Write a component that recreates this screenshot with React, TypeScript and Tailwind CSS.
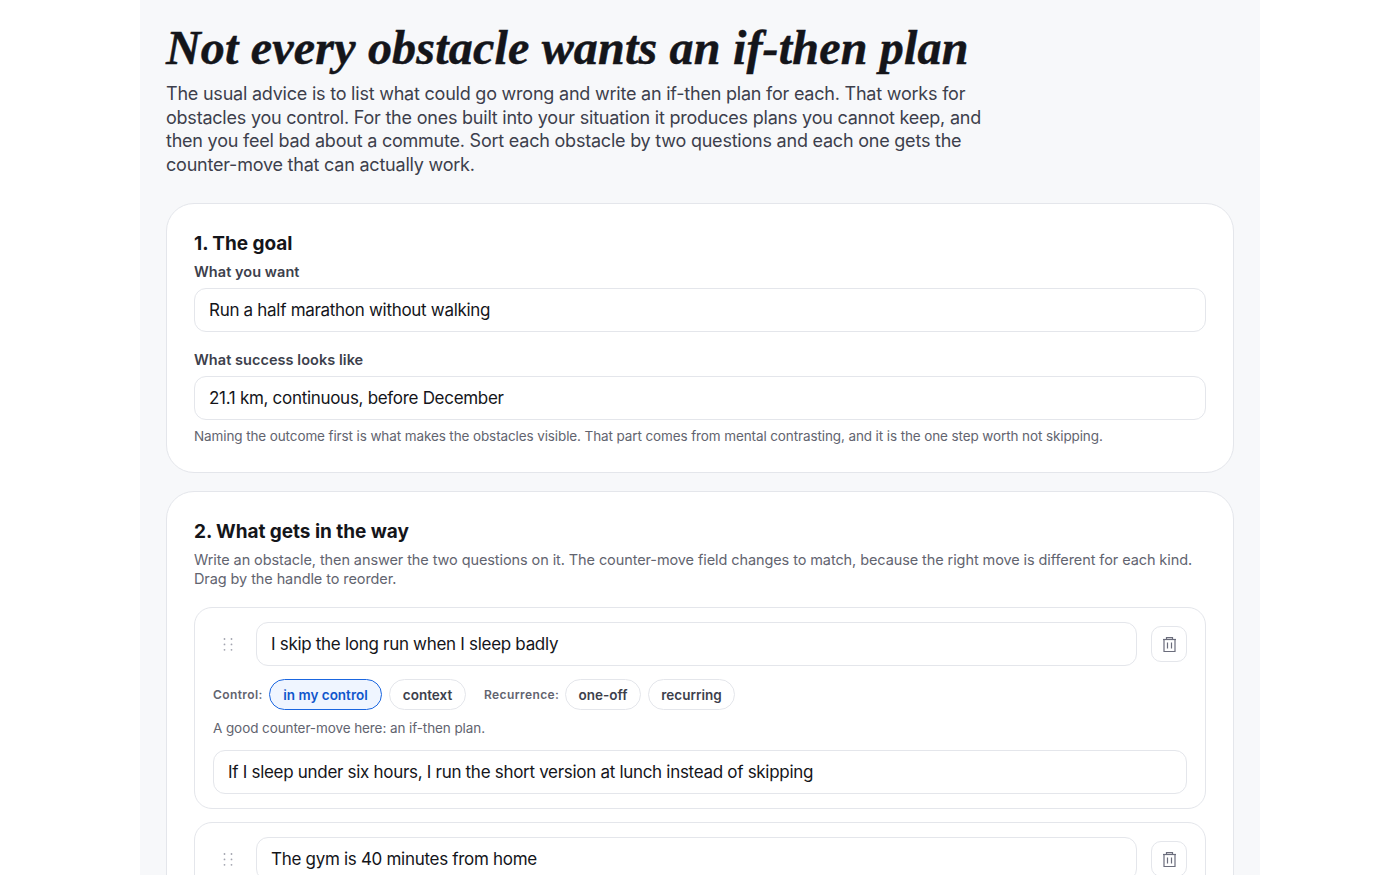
import React from 'react';

const sans = "font-['Inter','Noto_Sans',sans-serif]";

const inputClass =
  'block w-full h-[44px] px-[14px] bg-white border border-[#e4e6eb] rounded-[12px] text-[17px] tracking-[-0.3px] text-[#14151a] outline-none';

const GripIcon = () => (
  <svg width="10" height="15" viewBox="0 0 10 15" fill="#a2a4af">
    <circle cx="1.5" cy="2" r="0.9" />
    <circle cx="8.5" cy="2" r="0.9" />
    <circle cx="1.5" cy="7.4" r="0.9" />
    <circle cx="8.5" cy="7.4" r="0.9" />
    <circle cx="1.5" cy="12.8" r="0.9" />
    <circle cx="8.5" cy="12.8" r="0.9" />
  </svg>
);

const TrashIcon = () => (
  <svg width="13" height="15" viewBox="0 0 13 15" fill="none" stroke="#6b6d7c" strokeWidth="1.2">
    <path d="M0 2.5h13" />
    <path d="M3.5 2.5V.6h6v1.9" />
    <path d="M1 2.5v12h11v-12" />
    <path d="M4.5 5.5v6M8.5 5.5v6" />
  </svg>
);

const Pill = ({ label, width, active }: { label: string; width: string; active?: boolean }) => (
  <button
    className={
      active
        ? `${width} h-[31px] rounded-full border border-[#1a66e0] bg-[#eff5ff] text-[13.5px] font-semibold text-[#0f56cc]`
        : `${width} h-[31px] rounded-full border border-[#e4e6eb] bg-white text-[13.5px] font-semibold text-[#3d3f4c]`
    }
  >
    {label}
  </button>
);

const ObstacleHead = ({ value }: { value: string }) => (
  <div className="flex items-center">
    <div className="w-[43px] shrink-0 pl-[10px]">
      <GripIcon />
    </div>
    <input readOnly value={value} className={inputClass} />
    <button className="ml-[14px] shrink-0 w-[36px] h-[36px] rounded-[10px] border border-[#e4e6eb] flex items-center justify-center">
      <TrashIcon />
    </button>
  </div>
);

export default function App() {
  return (
    <div className={`h-screen overflow-hidden bg-white ${sans}`}>
      <main className="w-[1120px] mx-auto bg-[#f7f8fa] px-[26px] pt-[22px] min-h-full">
        <h1 className="font-['Liberation_Serif',serif] italic font-bold text-[48px] leading-[52px] tracking-[0.2px] [-webkit-text-stroke:0.5px_#14151a] text-[#14151a]">
          Not every obstacle wants an if-then plan
        </h1>
        <p className="mt-[8px] w-[825px] text-[18px] leading-[23.6px] tracking-[-0.22px] text-[#3d3f4c]">
          The usual advice is to list what could go wrong and write an if-then plan for each. That works for obstacles
          you control. For the ones built into your situation it produces plans you cannot keep, and then you feel bad
          about a commute. Sort each obstacle by two questions and each one gets the counter-move that can actually
          work.
        </p>

        <section className="mt-[27px] bg-white border border-[#e4e6eb] rounded-[28px] px-[27px] pt-[28px] pb-[27px]">
          <h2 className="text-[19px] leading-[24px] font-bold tracking-[-0.05px] text-[#14151a]">1. The goal</h2>
          <label className="block mt-[6px] mb-[7px] text-[14.5px] leading-[19px] font-semibold tracking-[0.05px] text-[#3d3f4c]">
            What you want
          </label>
          <input readOnly value="Run a half marathon without walking" className={inputClass} />
          <label className="block mt-[18px] mb-[7px] text-[14.5px] leading-[19px] font-semibold tracking-[0.05px] text-[#3d3f4c]">
            What success looks like
          </label>
          <input readOnly value="21.1 km, continuous, before December" className={inputClass} />
          <p className="mt-[7px] text-[13.5px] leading-[18px] tracking-[-0.11px] text-[#62646f]">
            Naming the outcome first is what makes the obstacles visible. That part comes from mental contrasting, and
            it is the one step worth not skipping.
          </p>
        </section>

        <section className="mt-[18px] bg-white border border-[#e4e6eb] rounded-[28px] px-[27px] pt-[28px] pb-[26px]">
          <h2 className="text-[19px] leading-[24px] font-bold tracking-[-0.05px] text-[#14151a]">
            2. What gets in the way
          </h2>
          <p className="mt-[6px] text-[14.5px] leading-[19px] tracking-[-0.09px] text-[#62646f]">
            Write an obstacle, then answer the two questions on it. The counter-move field changes to match, because
            the right move is different for each kind. Drag by the handle to reorder.
          </p>

          <div className="mt-[19px] border border-[#e4e6eb] rounded-[18px] px-[18px] pt-[14px] pb-[14px]">
            <ObstacleHead value="I skip the long run when I sleep badly" />
            <div className="mt-[13px] flex items-center">
              <span className="w-[56px] shrink-0 text-[12px] font-semibold tracking-[0.4px] text-[#62646f]">Control:</span>
              <Pill label="in my control" width="w-[113px]" active />
              <span className="ml-[7px]">
                <Pill label="context" width="w-[77px]" />
              </span>
              <span className="ml-[18px] w-[81px] shrink-0 text-[12px] font-semibold tracking-[0.4px] text-[#62646f]">
                Recurrence:
              </span>
              <Pill label="one-off" width="w-[76px]" />
              <span className="ml-[7px]">
                <Pill label="recurring" width="w-[87px]" />
              </span>
            </div>
            <p className="mt-[9px] mb-[13px] text-[13.5px] leading-[18px] tracking-[-0.09px] text-[#62646f]">
              A good counter-move here: an if-then plan.
            </p>
            <input
              readOnly
              value="If I sleep under six hours, I run the short version at lunch instead of skipping"
              className={inputClass}
            />
          </div>

          <div className="mt-[13px] border border-[#e4e6eb] rounded-[18px] px-[18px] pt-[14px] pb-[14px]">
            <ObstacleHead value="The gym is 40 minutes from home" />
          </div>
        </section>
      </main>
    </div>
  );
}
